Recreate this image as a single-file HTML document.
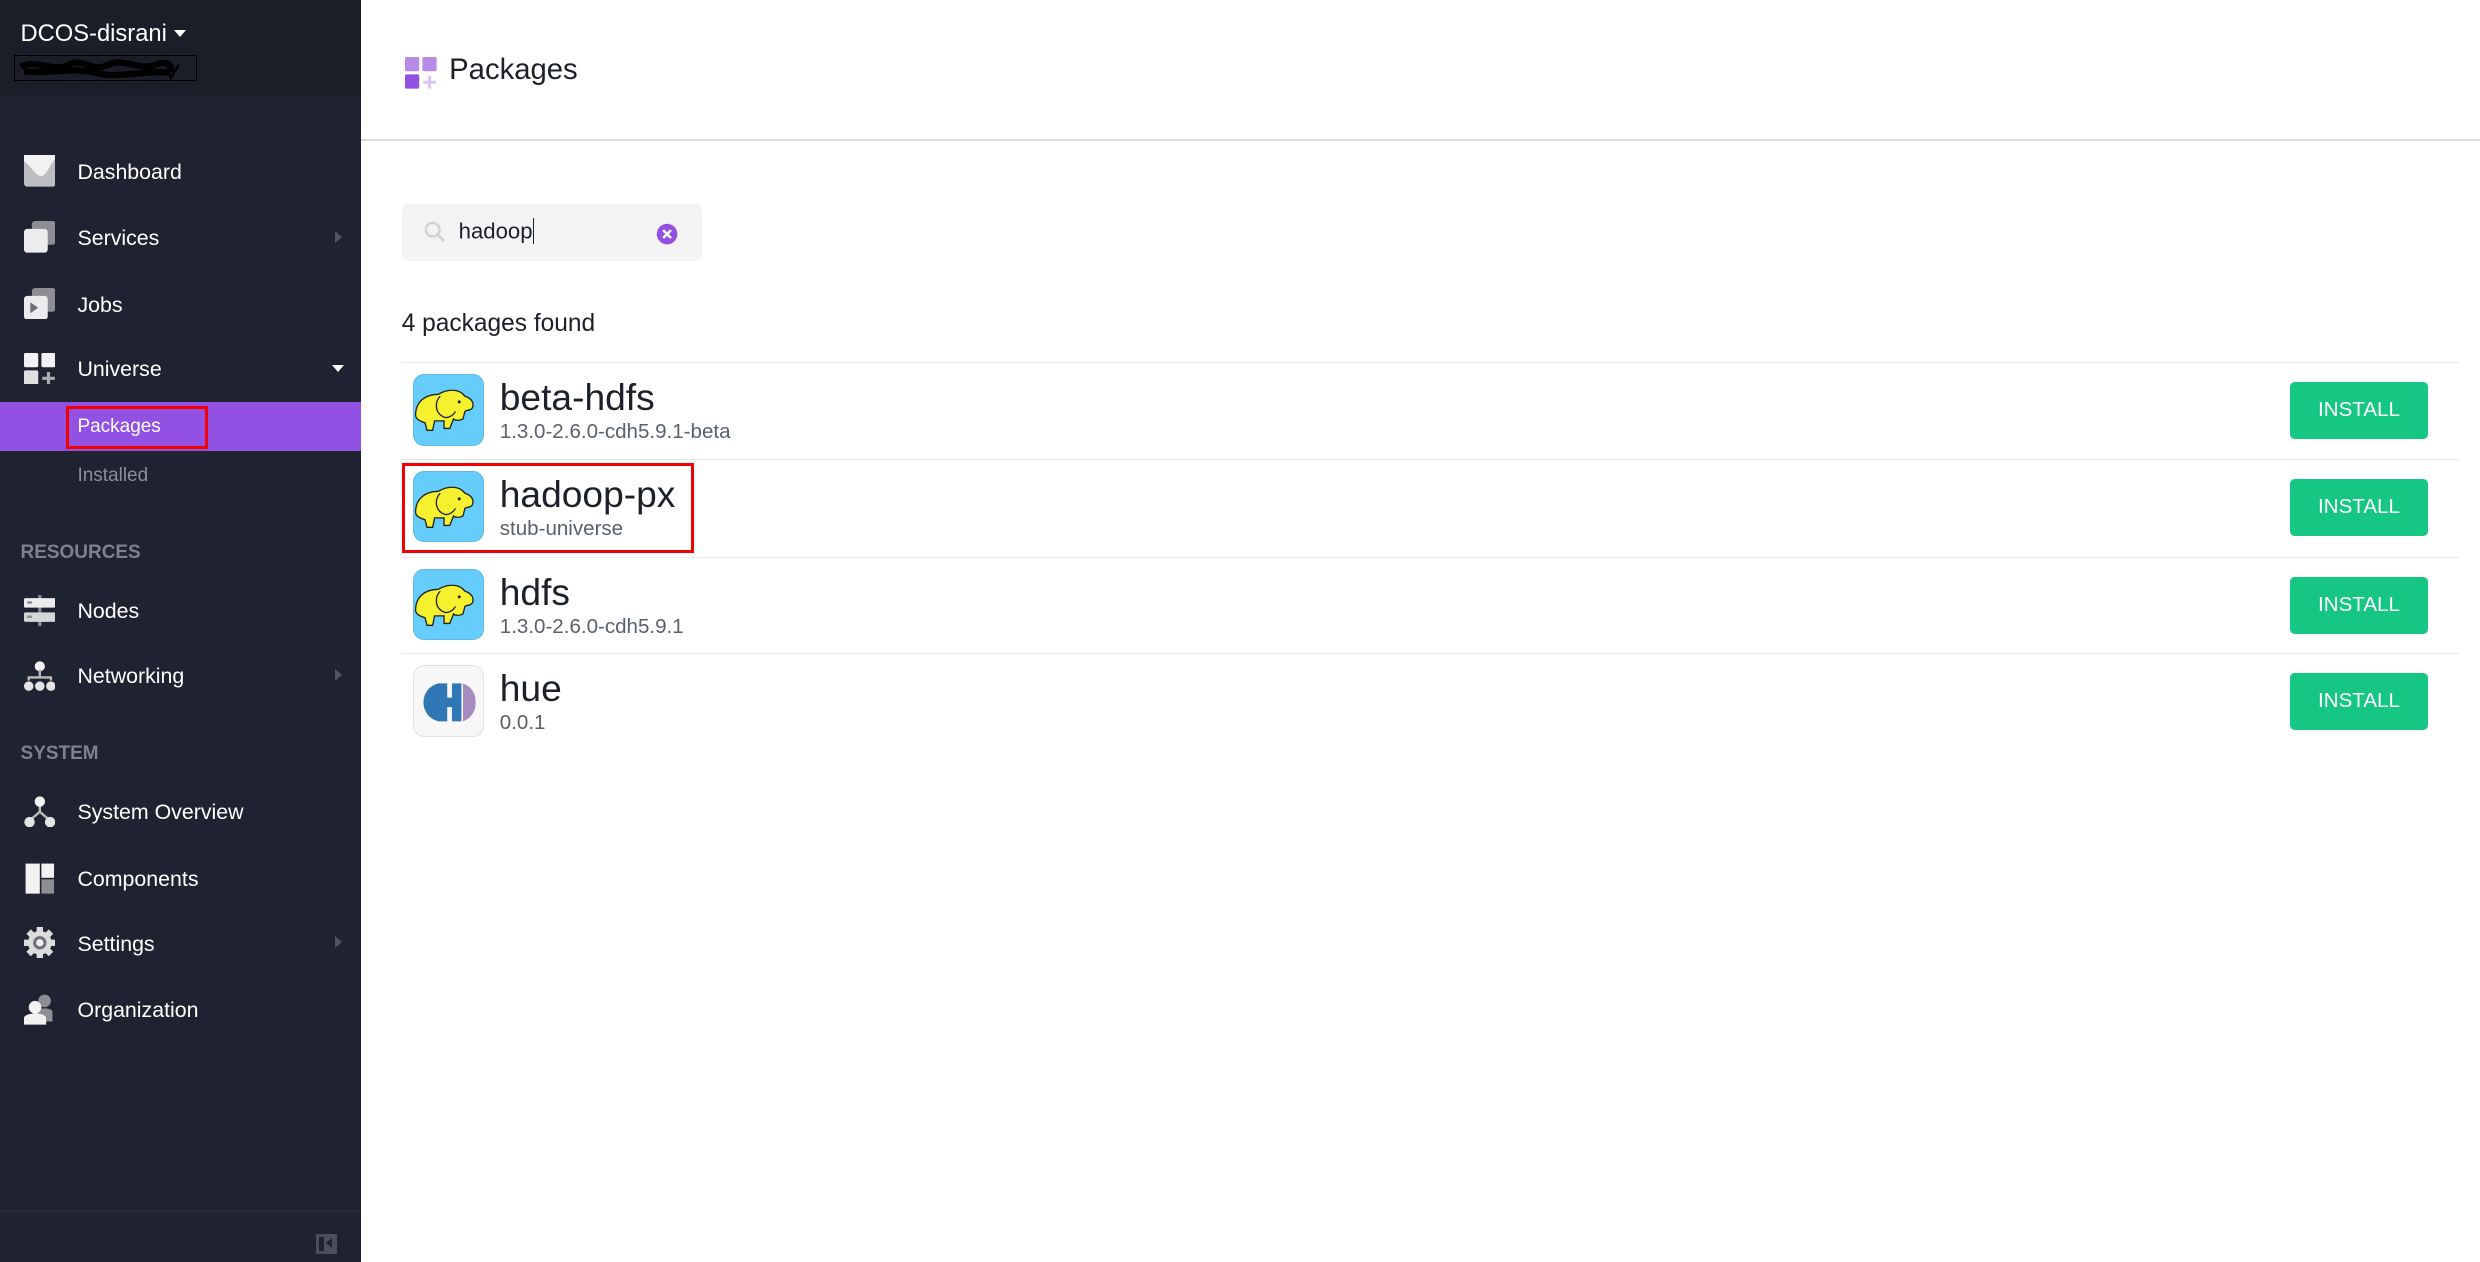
<!DOCTYPE html>
<html><head><meta charset="utf-8"><style>
html,body{margin:0;padding:0;background:#fff;overflow:hidden}
body{width:2480px;height:1262px}
#w{zoom:1.58163;width:1568px;height:798px;position:relative;font-family:"Liberation Sans",sans-serif;color:#1b2029}
.sb{position:absolute;left:0;top:0;width:228px;height:798px;background:#1f2230}
.top{position:absolute;left:0;top:0;width:228px;height:60px;background:#1b1e29}
.t{position:absolute;color:#fff;font-size:13.5px;left:49px;line-height:16px}
.ic{position:absolute;left:15px;width:20px;height:20px}
.hd{position:absolute;left:13px;color:#7d8290;font-size:12px;font-weight:bold}
.arr{position:absolute;left:212px;width:0;height:0;border-top:4px solid transparent;border-bottom:4px solid transparent;border-left:5px solid #4f5462}
.row{position:absolute;left:254px;width:1301px;height:61px;border-top:1px solid #e8e8eb}
.row .logo{position:absolute;left:7px;top:7px;width:44px;height:44px;border-radius:7px;background:#66ccfb;border:1px solid #5ab9e6;overflow:hidden}
.row .n{position:absolute;left:62px;top:9px;font-size:23.5px;color:#1b2029;line-height:26px}
.row .v{position:absolute;left:62px;top:36px;font-size:13px;color:#5a606c}
.btn{position:absolute;left:1194px;top:12px;width:87px;height:36px;border-radius:3px;background:#16c784;color:#fff;font-size:13px;text-align:center;line-height:36px}
</style></head><body><div id="w">
<div class="sb">
 <div class="top"></div>
 <div style="position:absolute;left:13px;top:13px;color:#fff;font-size:15px">DCOS-disrani</div>
 <div style="position:absolute;left:110px;top:19px;border-left:4px solid transparent;border-right:4px solid transparent;border-top:5px solid #fff"></div>
 <div style="position:absolute;left:9px;top:35px;width:114px;height:15px;border:1px solid #000;background:#1b1e29"></div>
 <svg style="position:absolute;left:10px;top:36px" width="114" height="15" viewBox="0 0 114 15"><path d="M3 6c10-5 20 4 30-1s15 5 25 0 20 4 30 0 10 3 12 3M5 9c15 2 30-3 45 1s30-2 48 0" stroke="#000" stroke-width="4" fill="none"/><path d="M95 4l3 9 5-8" stroke="#000" stroke-width="1.5" fill="none"/></svg>
 <svg class="ic" style="top:98px" viewBox="0 0 20 20"><rect width="20" height="20" rx="2" fill="#bdbec2"/><path d="M0 0h20v2c-3 3-5 9-8 11C8 15 4 6 0 4z" fill="#f2f2f3"/></svg>
 <div class="t" style="top:101px">Dashboard</div>
 <svg class="ic" style="top:140px" viewBox="0 0 20 20"><rect x="5" y="0" width="15" height="15" rx="2" fill="#8c8e94"/><rect x="0" y="5" width="15" height="15" rx="2" fill="#ececee"/></svg>
 <div class="t" style="top:143px">Services</div><div class="arr" style="top:146px"></div>
 <svg class="ic" style="top:182px" viewBox="0 0 20 20"><rect x="5" y="0" width="15" height="15" rx="2" fill="#8c8e94"/><rect x="0" y="5" width="15" height="15" rx="2" fill="#ececee"/><path d="M4 9l5 3.5-5 3.5z" fill="#6d7079"/></svg>
 <div class="t" style="top:185px">Jobs</div>
 <svg class="ic" style="top:223px" viewBox="0 0 20 20"><rect width="9" height="9" rx="1" fill="#f2f2f3"/><rect x="11" width="9" height="9" rx="1" fill="#f2f2f3"/><rect y="11" width="9" height="9" rx="1" fill="#e0e0e2"/><path d="M15.5 12v8M11.5 16h8" stroke="#aaacb1" stroke-width="2"/></svg>
 <div class="t" style="top:226px">Universe</div>
 <div style="position:absolute;left:210px;top:231px;border-left:4px solid transparent;border-right:4px solid transparent;border-top:5px solid #fff"></div>
 <div style="position:absolute;left:0;top:254px;width:228px;height:31px;background:#9351e3"></div>
 <div style="position:absolute;left:42px;top:257px;width:86px;height:23px;border:2px solid #f30000"></div>
 <div class="t" style="top:262px;font-size:12px">Packages</div>
 <div class="t" style="top:293px;font-size:12px;color:#8a8f9b">Installed</div>
 <div class="hd" style="top:343px">RESOURCES</div>
 <svg class="ic" style="top:376px" viewBox="0 0 20 20"><rect x="9" y="0" width="2" height="20" fill="#8c8e94"/><rect y="2" width="20" height="6" rx="1" fill="#ececee"/><rect y="11" width="20" height="6" rx="1" fill="#d5d6d8"/><rect x="2" y="4" width="3" height="1.5" fill="#888"/><rect x="2" y="13" width="3" height="1.5" fill="#888"/></svg>
 <div class="t" style="top:379px">Nodes</div>
 <svg class="ic" style="top:417px" viewBox="0 0 20 20"><circle cx="10" cy="4" r="3.2" fill="#f2f2f3"/><path d="M10 6v5M3 13v-2h14v2" stroke="#bbb" stroke-width="1.5" fill="none"/><circle cx="3" cy="16.5" r="3" fill="#e4e4e6"/><circle cx="10" cy="16.5" r="3" fill="#e4e4e6"/><circle cx="17" cy="16.5" r="3" fill="#e4e4e6"/></svg>
 <div class="t" style="top:420px">Networking</div><div class="arr" style="top:423px"></div>
 <div class="hd" style="top:470px">SYSTEM</div>
 <svg class="ic" style="top:503px" viewBox="0 0 20 20"><path d="M10 4v6L3 16M10 10l7 6" stroke="#bbb" stroke-width="1.5" fill="none"/><circle cx="10" cy="3.5" r="3.3" fill="#f2f2f3"/><circle cx="3.5" cy="16.5" r="3.3" fill="#e4e4e6"/><circle cx="16.5" cy="16.5" r="3.3" fill="#e4e4e6"/></svg>
 <div class="t" style="top:506px">System Overview</div>
 <svg class="ic" style="top:545px" viewBox="0 0 20 20"><rect x="1" y="1" width="9" height="19" fill="#f2f2f3"/><rect x="11" y="1" width="8" height="9" fill="#f2f2f3"/><rect x="11" y="11" width="8" height="9" fill="#8c8e94"/></svg>
 <div class="t" style="top:548px">Components</div>
 <svg class="ic" style="top:586px" viewBox="0 0 20 20"><g fill="#dcdcde"><circle cx="10" cy="10" r="7.5"/><rect x="8" y="0" width="4" height="20"/><rect x="0" y="8" width="20" height="4"/><rect x="8" y="0" width="4" height="20" transform="rotate(45 10 10)"/><rect x="8" y="0" width="4" height="20" transform="rotate(-45 10 10)"/></g><circle cx="10" cy="10" r="4.2" fill="#6d7079"/><circle cx="10" cy="10" r="2.3" fill="#eee"/></svg>
 <div class="t" style="top:589px">Settings</div><div class="arr" style="top:592px"></div>
 <svg class="ic" style="top:628px" viewBox="0 0 20 20"><circle cx="13" cy="5" r="4" fill="#8c8e94"/><path d="M8 12c0-3 10-3 10 0v6H8z" fill="#8c8e94"/><circle cx="7" cy="9" r="4" fill="#f2f2f3"/><path d="M0 16c0-4 14-4 14 0v4H0z" fill="#f2f2f3"/></svg>
 <div class="t" style="top:631px">Organization</div>
 <div style="position:absolute;left:0;top:765px;width:228px;height:1px;background:#262a37"></div>
 <div style="position:absolute;left:200px;top:780px;width:13px;height:13px;background:#4a4e5c"><div style="position:absolute;left:2px;top:2px;width:3px;height:9px;background:#1f2230"></div><div style="position:absolute;left:6px;top:3px;border-top:3.5px solid transparent;border-bottom:3.5px solid transparent;border-right:4px solid #1f2230"></div></div>
</div>
<svg style="position:absolute;left:256px;top:36px" width="20" height="20" viewBox="0 0 20 20"><rect width="9" height="9" rx="1" fill="#b98be9"/><rect x="11" width="9" height="9" rx="1" fill="#b98be9"/><rect y="11" width="9" height="9" rx="1" fill="#9351e3"/><path d="M15.5 12v8M11.5 16h8" stroke="#dcc6f5" stroke-width="2"/></svg>
<div style="position:absolute;left:284px;top:34px;font-size:18.5px;color:#1b2029">Packages</div>
<div style="position:absolute;left:228px;top:88px;width:1340px;height:1px;background:#dcdcdf"></div>
<div style="position:absolute;left:254px;top:129px;width:190px;height:36px;border-radius:4px;background:#f3f3f4"></div>
<svg style="position:absolute;left:268px;top:140px" width="14" height="14" viewBox="0 0 14 14"><circle cx="5.5" cy="5.5" r="4.3" stroke="#d3d3d6" stroke-width="1.6" fill="none"/><path d="M8.7 8.7l4 4" stroke="#d3d3d6" stroke-width="1.8"/></svg>
<div style="position:absolute;left:290px;top:138px;font-size:14px;color:#1b2029">hadoop<span style="display:inline-block;width:1px;height:16px;background:#1b2029;vertical-align:-3px"></span></div>
<svg style="position:absolute;left:415px;top:141px" width="14" height="14" viewBox="0 0 14 14"><circle cx="7" cy="7" r="6.5" fill="#9351e3"/><path d="M4.5 4.5l5 5M9.5 4.5l-5 5" stroke="#fff" stroke-width="1.6"/></svg>
<div style="position:absolute;left:254px;top:196px;font-size:15.5px;color:#1b2029">4 packages found</div>

<svg width="0" height="0" style="position:absolute"><defs><g id="el"><g transform="translate(19 23) scale(1.2) translate(-24 -24)"><g stroke="#222" stroke-width="0.7" fill="#f5f12f"><path d="M9 26c0-7 5-11 12-11 5-3 11-3 14 1 3 1 5 3 4 6-1 2-3 1-4 2l-1 4c-2 1-4 1-5 0l-2 5-3 0 0-4h-5l-1 5-3 0-1-4c-3-1-5-2-5-4z"/><path d="M22 16c-3 3-3 9 2 11 2 1 5-1 6-3" fill="none"/><path d="M8 27c-2 0-3-2-1-4" fill="none"/></g><circle cx="32" cy="19" r="0.8" fill="#222"/></g></g></defs></svg>
<div class="row" style="top:229px"><div class="logo"><svg width="44" height="44" viewBox="0 0 44 44"><use href="#el"/></svg></div><div class="n">beta-hdfs</div><div class="v">1.3.0-2.6.0-cdh5.9.1-beta</div><div class="btn">INSTALL</div></div>
<div class="row" style="top:290px"><div class="logo"><svg width="44" height="44" viewBox="0 0 44 44"><use href="#el"/></svg></div><div class="n">hadoop-px</div><div class="v">stub-universe</div><div class="btn">INSTALL</div></div>
<div class="row" style="top:352px"><div class="logo"><svg width="44" height="44" viewBox="0 0 44 44"><use href="#el"/></svg></div><div class="n">hdfs</div><div class="v">1.3.0-2.6.0-cdh5.9.1</div><div class="btn">INSTALL</div></div>
<div class="row" style="top:413px"><div class="logo" style="background:#f7f7f8;border-color:#e2e2e4"><svg width="44" height="44" viewBox="0 0 44 44"><path d="M16 11c-6 1-10 6-10 12s4 11 10 12z" fill="#2f78b5"/><rect x="15" y="11" width="6" height="24" fill="#2f78b5"/><rect x="10" y="20" width="16" height="6" fill="#2f78b5"/><rect x="24" y="11" width="6" height="24" fill="#2f78b5"/><path d="M31 11c5 2 8 6 8 12s-3 10-8 12z" fill="#a68bc0"/></svg></div><div class="n">hue</div><div class="v">0.0.1</div><div class="btn">INSTALL</div></div>
<div style="position:absolute;left:254px;top:293px;width:181px;height:53px;border:2px solid #f30000"></div>
</div></body></html>
